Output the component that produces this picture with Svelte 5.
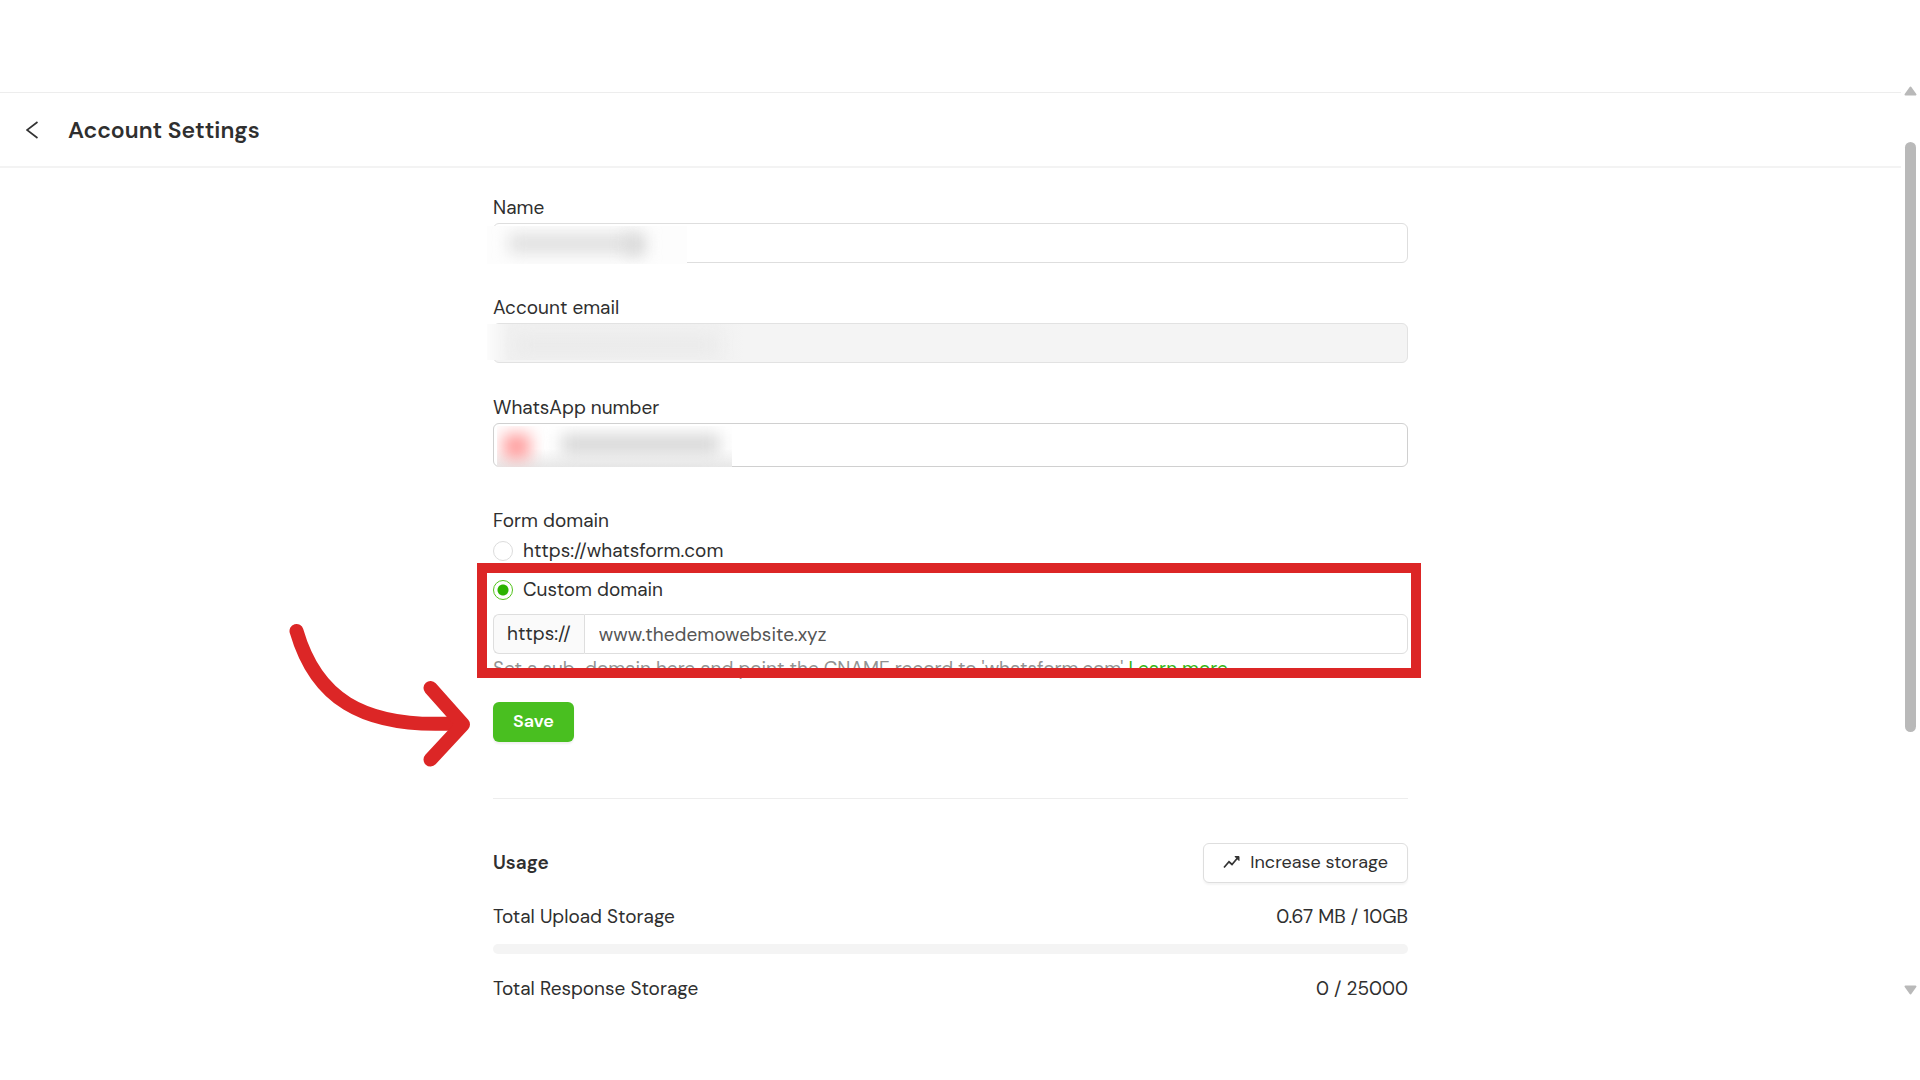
<script lang="ts">
  interface UsageRow {
    label: string;
    value: string;
    percent: number | null;
  }

  let domainType = $state('custom');
  let customDomain = $state('www.thedemowebsite.xyz');

  const usage: UsageRow[] = [
    { label: 'Total Upload Storage', value: '0.67 MB / 10GB', percent: 0 },
    { label: 'Total Response Storage', value: '0 / 25000', percent: null },
  ];
</script>

<div class="shell">
  <main class="page">
    <header class="header">
      <button class="back" type="button" aria-label="Back">
        <svg width="12" height="18" viewBox="0 0 12 18" fill="none" stroke="#333" stroke-width="1.7">
          <path d="M11.5 1 1 9l10.5 8" />
        </svg>
      </button>
      <h1>Account Settings</h1>
    </header>

    <div class="content">
      <form onsubmit={(e) => e.preventDefault()}>
        <div class="field">
          <label for="name">Name</label>
          <div class="control">
            <input id="name" type="text" />
            <div class="mask mask-name"><i class="smudge name-a"></i><i class="smudge name-b"></i></div>
          </div>
        </div>

        <div class="field">
          <label for="email">Account email</label>
          <div class="control">
            <input id="email" type="email" disabled />
            <div class="mask mask-email"><i class="smudge email-a"></i></div>
          </div>
        </div>

        <div class="field">
          <label for="phone">WhatsApp number</label>
          <div class="control">
            <input id="phone" class="tall" type="tel" />
            <div class="mask mask-phone"><i class="smudge flag"></i><i class="smudge digits"></i></div>
          </div>
        </div>

        <fieldset>
          <legend>Form domain</legend>
          <label class="radio">
            <input type="radio" name="domain" value="default" bind:group={domainType} />
            https://whatsform.com
          </label>
          <div class="custom">
            <label class="radio">
              <input type="radio" name="domain" value="custom" bind:group={domainType} />
              Custom domain
            </label>
            <div class="addon-group">
              <label class="addon" for="domain">https://</label>
              <input id="domain" type="text" bind:value={customDomain} />
            </div>
            <p class="hint">
              Set a sub-domain here and point the CNAME record to 'whatsform.com'
              <a href="#learn">Learn more</a>
            </p>
            <div class="highlight"></div>
          </div>
        </fieldset>

        <div class="actions">
          <button class="save" type="submit">Save</button>
          <svg class="arrow" width="184" height="146" viewBox="0 0 184 146" fill="none" stroke="#dc2626" stroke-linecap="round" stroke-linejoin="round" aria-hidden="true">
            <path stroke-width="14" d="M8.500 9C27 73 71 108 171 101" />
            <path stroke-width="14" d="M142.500 66 175 102.500 142.500 137.500" />
          </svg>
        </div>
      </form>

      <section class="usage">
        <div class="usage-head">
          <h2>Usage</h2>
          <button class="increase" type="button">
            <svg width="17" height="14" viewBox="0 0 17 14" fill="none" stroke="#333" stroke-width="1.7">
              <path d="M1 12.500 6 6.800l3 2.700L14.500 3" />
              <path d="M12 1.500h4v4z" fill="#333" stroke-width="1" />
            </svg>
            Increase storage
          </button>
        </div>
        {#each usage as row}
          <div class="usage-row">
            <span>{row.label}</span>
            <span>{row.value}</span>
          </div>
          {#if row.percent !== null}
            <div class="bar"><div class="bar-fill" style="width: {row.percent}%"></div></div>
          {/if}
        {/each}
      </section>
    </div>
  </main>

  <div class="scrollbar" aria-hidden="true">
    <svg width="13" height="10" viewBox="0 0 13 10"><path d="M6.500 1.500 11.500 8.500H1.500z" fill="#b9b9b9" stroke="#b9b9b9" stroke-width="2" stroke-linejoin="round" /></svg>
    <div class="track"><div class="thumb"></div></div>
    <svg width="13" height="10" viewBox="0 0 13 10"><path d="M6.500 8.500 11.500 1.500H1.500z" fill="#b9b9b9" stroke="#b9b9b9" stroke-width="2" stroke-linejoin="round" /></svg>
  </div>
</div>

<style>
  :global(body) {
    background: #fff;
    color: #2f2f2f;
    font-family: 'DM Sans', Inter, 'Open Sans', sans-serif;
    font-size: 19px;
    line-height: 30px;
  }

  .shell {
    display: grid;
    grid-template-columns: 1fr 19px;
    padding-top: 86px;
    padding-bottom: 74px;
  }

  .page {
    padding-top: 6px;
    min-width: 0;
  }

  .header {
    display: flex;
    align-items: center;
    gap: 30px;
    height: 73px;
    padding-left: 26px;
    border-top: 1px solid #ededed;
    border-bottom: 2px solid #f3f3f3;
  }

  .back {
    display: flex;
    padding: 0;
    border: 0;
    background: none;
  }

  h1,
  h2 {
    margin: 0;
    font-weight: 600;
  }

  h1 {
    font-size: 23px;
    line-height: 30px;
  }

  h2 {
    font-size: 19px;
  }

  .content {
    max-width: 915px;
    margin: 0 auto;
    padding-top: 25px;
  }

  .field {
    margin-bottom: 30px;
  }

  .field label {
    display: block;
  }

  .control {
    position: relative;
  }

  input,
  button {
    box-sizing: border-box;
    font: inherit;
    color: inherit;
  }

  input:not([type='radio']) {
    display: block;
    width: 100%;
    height: 40px;
    padding: 0 14px;
    border: 1px solid #dedede;
    border-radius: 6px;
    background: #fff;
    outline: none;
  }

  input:disabled:not([type='radio']) {
    background: #f4f4f4;
    border-color: #e2e2e2;
  }

  input.tall:not([type='radio']) {
    height: 44px;
    border-color: #d0d0d0;
  }

  /* Privacy masks over the personal details */
  .mask {
    position: absolute;
    overflow: hidden;
  }

  .smudge {
    position: absolute;
    filter: blur(8px);
  }

  .mask-name {
    inset: 3px auto -1px -6px;
    width: 200px;
    background: #fdfdfd;
  }

  .name-a {
    inset: 8px 52px 11px 22px;
    background: #dfdfdf;
  }

  .name-b {
    inset: 8px 42px 9px 140px;
    background: #d4d4d4;
  }

  .mask-email {
    inset: 1px auto 3px -6px;
    width: 257px;
    background: linear-gradient(90deg, #fcfcfc, #f0f0f0 24px, #f1f1f1 230px, #f4f4f4);
  }

  .email-a {
    inset: 14px 28px 8px 30px;
    background: #e9e9e9;
  }

  .mask-phone {
    inset: 3px auto 0 4px;
    width: 235px;
    background: linear-gradient(#fff 55%, #e8e8e8);
  }

  .flag {
    inset: 8px auto 8px 6px;
    width: 27px;
    background: #ff9c9c;
  }

  .digits {
    inset: 8px 12px 12px 64px;
    background: #d8d8d8;
  }

  fieldset {
    display: flex;
    flex-direction: column;
    margin: 0;
    padding: 9px 0 0;
    border: 0;
    min-width: 0;
  }

  legend {
    float: left;
    padding: 0;
  }

  .radio {
    display: flex;
    align-items: center;
    gap: 10px;
  }

  input[type='radio'] {
    appearance: none;
    width: 20px;
    height: 20px;
    margin: 0;
    border: 1px solid #dcdcdc;
    border-radius: 50%;
    background: #fff;
  }

  input[type='radio']:checked {
    border-color: #52c41a;
    background: radial-gradient(circle, #2bb300 5px, #fff 6px);
  }

  .custom {
    position: relative;
    padding-top: 9px;
  }

  .addon-group {
    display: flex;
    margin-top: 9px;
  }

  .addon {
    box-sizing: border-box;
    height: 40px;
    padding: 4px 13px;
    border: 1px solid #dedede;
    border-right: 0;
    border-radius: 6px 0 0 6px;
    background: #fafafa;
  }

  .addon-group input:not([type='radio']) {
    flex: 1;
    min-width: 0;
    border-radius: 0 6px 6px 0;
    color: #555;
  }

  .hint {
    margin: 0;
    color: #929292;
  }

  .hint a {
    color: #35b312;
    text-decoration: none;
  }

  .highlight {
    position: absolute;
    inset: -3px -13px 6px -16px;
    border: 10px solid #dc2626;
    pointer-events: none;
  }

  .actions {
    position: relative;
    margin-top: 18px;
    padding-bottom: 56px;
    border-bottom: 1px solid #ededed;
  }

  .save {
    display: block;
    height: 40px;
    padding: 0 20px 2px;
    border: 0;
    border-radius: 6px;
    background: #49bf20;
    color: #fff;
    font-size: 18px;
    font-weight: 600;
    box-shadow: 0 2px 2px #f0f0f0;
  }

  .arrow {
    position: absolute;
    top: -80px;
    left: -205px;
  }

  .usage {
    padding-top: 44px;
  }

  .usage-head,
  .usage-row {
    display: flex;
    align-items: center;
    justify-content: space-between;
  }

  .usage-head {
    margin-bottom: 19px;
  }

  .increase {
    display: flex;
    align-items: center;
    gap: 10px;
    height: 40px;
    padding: 0 19px 2px;
    border: 1px solid #dedede;
    border-radius: 6px;
    background: #fff;
    font-size: 18px;
    box-shadow: 0 2px 2px #f5f5f5;
  }

  .bar {
    height: 10px;
    margin: 12px 0 20px;
    border-radius: 5px;
    background: #f4f4f4;
    overflow: hidden;
  }

  .bar-fill {
    height: 100%;
    background: #49bf20;
  }

  .scrollbar {
    display: flex;
    flex-direction: column;
    align-items: center;
    margin-bottom: 9px;
    padding-right: 1px;
  }

  .track {
    flex: 1;
    width: 11px;
    padding: 46px 0 0;
  }

  .thumb {
    height: 70%;
    border-radius: 6px;
    background: #b9b9b9;
  }
</style>
